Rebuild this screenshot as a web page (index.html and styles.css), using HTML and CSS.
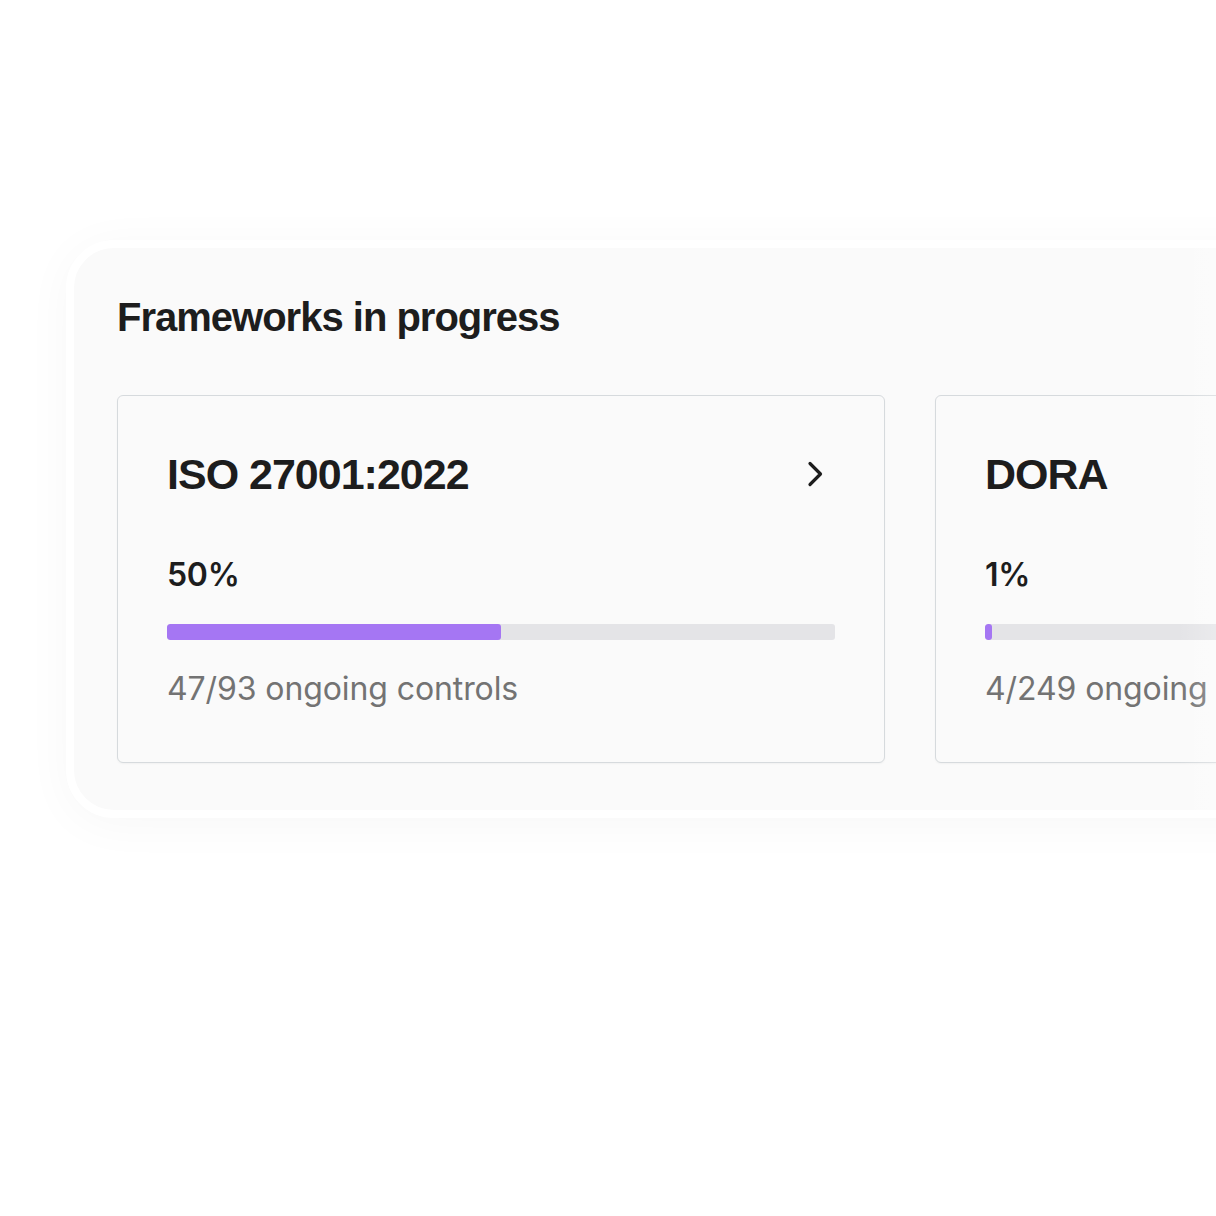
FILE: index.html
```html
<!DOCTYPE html>
<html lang="en">
<head>
<meta charset="utf-8">
<title>Frameworks in progress</title>
<link rel="stylesheet" href="styles.css">
</head>
<body>
<div class="stage">
  <section class="panel">
    <h1 class="panel-title">Frameworks in progress</h1>
    <div class="cards">
      <article class="card">
        <div class="card-head">
          <h2 class="card-title">ISO 27001:2022</h2>
          <svg class="chev" width="20" height="28" viewBox="0 0 20 28" aria-hidden="true"><path d="M4 3.5 L14.5 14 L4 24.5" fill="none" stroke="#1c1c1c" stroke-width="3.2" stroke-linecap="round" stroke-linejoin="round"/></svg>
        </div>
        <div class="pct">50%</div>
        <div class="bar"><div class="fill" style="width:50%"></div></div>
        <div class="meta">47/93 ongoing controls</div>
      </article>
      <article class="card">
        <div class="card-head">
          <h2 class="card-title">DORA</h2>
        </div>
        <div class="pct">1%</div>
        <div class="bar"><div class="fill" style="width:1%"></div></div>
        <div class="meta">4/249 ongoing controls</div>
      </article>
    </div>
    <div class="fade"></div>
  </section>
</div>
</body>
</html>
```

FILE: styles.css
```css
html, body {
  margin: 0;
  padding: 0;
  background: #ffffff;
  overflow: hidden;
  width: 1216px;
  height: 1216px;
}

.stage {
  padding: 240px 0 0 66px;
}

.panel {
  position: relative;
  box-sizing: border-box;
  width: 1260px;
  height: 578px;
  border: 8px solid #ffffff;
  border-radius: 48px;
  background: #fafafa;
  box-shadow: 0 6px 48px rgba(0, 0, 0, 0.035);
  padding: 45px 0 0 43px;
  overflow: hidden;
}

.panel-title {
  margin: 0;
  font-family: "Liberation Sans", Arial, sans-serif;
  font-weight: 700;
  font-size: 40px;
  line-height: 48px;
  letter-spacing: -1.0px;
  color: #1d1d1d;
}

.cards {
  display: flex;
  gap: 50px;
  margin-top: 54px;
}

.card {
  flex: 0 0 auto;
  box-sizing: border-box;
  width: 768px;
  height: 368px;
  border: 1.5px solid #d6dadd;
  border-radius: 6px;
  background: #fafafa;
  box-shadow: 0 1px 2px rgba(0, 0, 0, 0.04);
  padding: 52px 49px 0 49px;
}

.card-head {
  display: flex;
  align-items: center;
  justify-content: space-between;
  height: 52px;
}

.card-title {
  margin: 0;
  font-family: "Liberation Sans", Arial, sans-serif;
  font-weight: 700;
  font-size: 43px;
  line-height: 52px;
  letter-spacing: -1.0px;
  color: #1d1d1d;
}

.chev {
  display: block;
  margin-right: 9px;
}

.pct {
  margin-top: 55px;
  font-family: Inter, "Noto Sans", sans-serif;
  font-weight: 600;
  font-size: 32px;
  line-height: 40px;
  letter-spacing: -0.3px;
  color: #1d1d1d;
}

.bar {
  margin-top: 29px;
  height: 16px;
  border-radius: 3px;
  background: #e4e4e7;
  overflow: hidden;
}

.fill {
  height: 100%;
  background: #a576f3;
  border-radius: 3px;
}

.meta {
  margin-top: 29px;
  font-family: Inter, "Noto Sans", sans-serif;
  font-weight: 400;
  font-size: 32px;
  line-height: 40px;
  letter-spacing: -0.1px;
  color: #737373;
  white-space: nowrap;
}

.fade {
  position: absolute;
  top: -8px;
  bottom: -8px;
  right: -60px;
  width: 200px;
  background: linear-gradient(to right, rgba(255, 255, 255, 0) 0%, rgba(255, 255, 255, 0.75) 60%, rgba(255, 255, 255, 0.85) 100%);
  pointer-events: none;
}
```
